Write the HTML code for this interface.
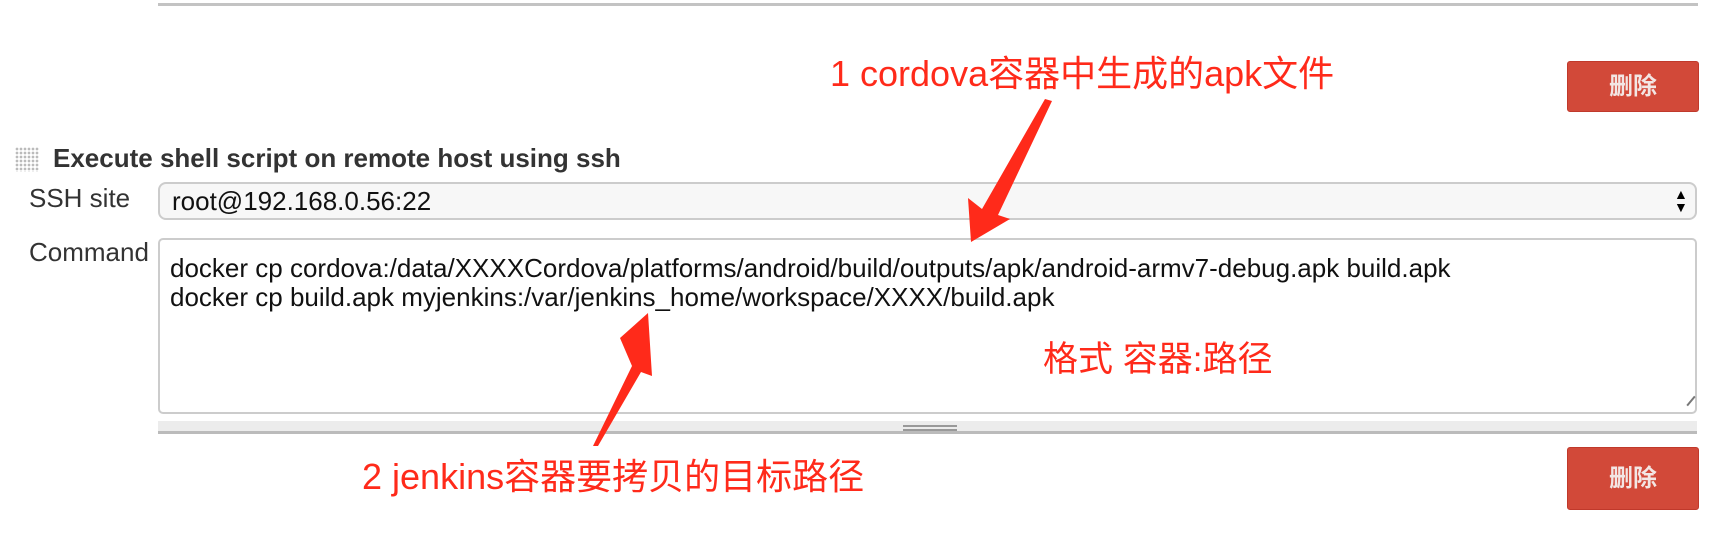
<!DOCTYPE html>
<html><head><meta charset="utf-8"><style>
body{margin:0;width:1731px;height:534px;background:#fff;position:relative;overflow:hidden;font-family:"Liberation Sans","Noto Sans CJK SC",sans-serif;color:#333}
.abs{position:absolute;white-space:nowrap}
.btn{position:absolute;left:1567px;width:132px;background:#d24939;border:1px solid #c0392b;border-radius:3px;color:#f3e6e4;font-weight:bold;font-size:24px;text-align:center;box-sizing:border-box}
.red{color:#ff2a1a;position:absolute;white-space:nowrap;font-size:36px;line-height:1}
</style></head><body>
<div class="abs" style="left:158px;top:3px;width:1540px;height:3px;background:#c3c3c3"></div>
<div class="btn" style="top:61px;height:51px;line-height:49px">删除</div>
<div class="red" style="left:830px;top:56px">1 cordova容器中生成的apk文件</div>

<div class="abs" style="left:15px;top:147px;width:24px;height:25px;background-image:radial-gradient(#bbb 45%,transparent 50%);background-size:4px 4px"></div>
<div class="abs" style="left:53px;top:143px;font-size:26px;line-height:30px;font-weight:bold;color:#333">Execute shell script on remote host using ssh</div>
<div class="abs" style="left:29px;top:183px;font-size:26px;line-height:30px">SSH site</div>
<div class="abs" style="left:158px;top:182px;width:1539px;height:38px;box-sizing:border-box;border:2px solid #ccc;border-radius:8px;background:#f7f7f7"></div>
<div class="abs" style="left:172px;top:186px;font-size:26px;line-height:30px;color:#111">root@192.168.0.56:22</div>
<div class="abs" style="left:1674px;top:188px;font-size:14px;line-height:13px;color:#000">▲<br>▼</div>
<div class="abs" style="left:29px;top:237px;font-size:26px;line-height:30px">Command</div>
<div class="abs" style="left:158px;top:238px;width:1539px;height:176px;box-sizing:border-box;border:2px solid #ccc;border-radius:5px;background:#fff"></div>
<div class="abs" style="left:170px;top:254px;font-size:26px;line-height:29px;color:#111;white-space:pre">docker cp cordova:/data/XXXXCordova/platforms/android/build/outputs/apk/android-armv7-debug.apk build.apk
docker cp build.apk myjenkins:/var/jenkins_home/workspace/XXXX/build.apk</div>
<div class="abs" style="left:1685px;top:400px;width:12px;height:2px;background:#777;transform:rotate(-50deg)"></div>
<div class="abs" style="left:158px;top:421px;width:1539px;height:13px;box-sizing:border-box;background:#ececec;border-bottom:3px solid #bbb"></div>
<div class="abs" style="left:903px;top:425px;width:54px;height:2px;background:#999;box-shadow:0 4px 0 #999"></div>
<div class="btn" style="top:447px;height:63px;line-height:61px">删除</div>
<div class="red" style="left:1043px;top:342px;font-size:35px">格式 容器:路径</div>
<div class="red" style="left:362px;top:459px">2 jenkins容器要拷贝的目标路径</div>
<svg class="abs" style="left:0;top:0" width="1731" height="534">
<polygon fill="#ff2a1a" points="1045,99 1052,101 998,215 1010,219 971,242 968,198 982,209"/>
<polygon fill="#ff2a1a" points="593,446 598,446 641,372 652,376 648,313 620,338 632,366"/>
</svg>
</body></html>
